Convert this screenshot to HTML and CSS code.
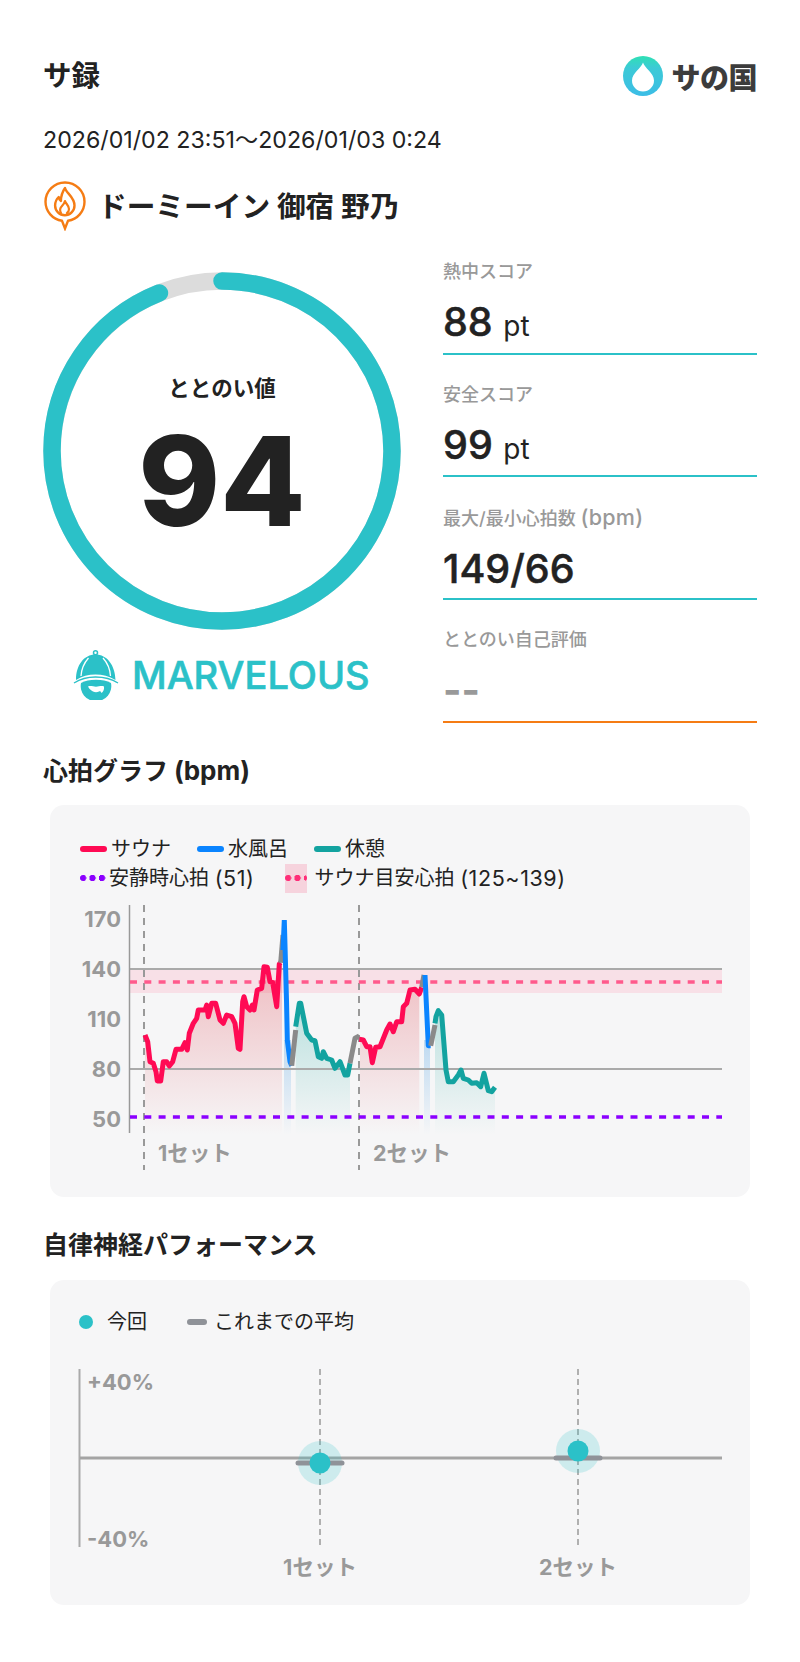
FILE: index.html
```html
<!DOCTYPE html>
<html lang="ja">
<head>
<meta charset="utf-8">
<title>サ録</title>
<link rel="stylesheet" href="styles.css">
</head>
<body>
<main class="page">
  <header class="top">
    <h1 class="title">サ録</h1>
    <div class="logo">
      <svg class="logo-mark" viewBox="0 0 40 40" aria-hidden="true">
        <defs><linearGradient id="lg" x1="0" y1="0" x2="0" y2="1"><stop offset="0" stop-color="#2fe0b4"/><stop offset=".3" stop-color="#3ccad6"/><stop offset="1" stop-color="#3cbde6"/></linearGradient></defs>
        <circle cx="20" cy="20" r="20" fill="url(#lg)"/>
        <path d="M20 6.500C21.500 12 31 17 31 24.500A11 11 0 0 1 9 24.500C9 17 18.500 12 20 6.500Z" fill="#fff"/>
      </svg>
      <span class="logo-text">サの国</span>
    </div>
  </header>
  <p class="date">2026/01/02 23:51～2026/01/03 0:24</p>
  <div class="venue">
    <svg class="pin" viewBox="0 0 42 50" aria-hidden="true">
      <path d="M21 1.500C10.200 1.500 1.500 10.200 1.500 20.800c0 9.600 7.100 17.600 16.500 19L21 47.500l3-7.700c9.400-1.400 16.500-9.400 16.500-19C40.500 10.200 31.800 1.500 21 1.500Z" fill="none" stroke="#f57c14" stroke-width="2.400"/>
      <path d="M21 7c1 5 9.500 9 9.500 17.500a9.700 9.700 0 0 1-19.400 0c0-4 1.800-6.800 3.600-8.500.3 2 1 3.300 2.200 4C17 15.500 18.500 10.500 21 7Z" fill="none" stroke="#f57c14" stroke-width="2.400" stroke-linejoin="round"/>
      <path d="M17 32c-1.500-2.500-1-5 1-7 1.500-1.500 2.500-3 3-5 .5 2.500 4 4.500 4 8 0 1.800-1 3.300-2 4" fill="none" stroke="#f57c14" stroke-width="2.200" stroke-linejoin="round" stroke-linecap="round"/>
    </svg>
    <span class="venue-name">ドーミーイン 御宿 野乃</span>
  </div>

  <section class="summary">
    <div class="score">
      <div class="ring">
        <svg class="ring-svg" viewBox="0 0 358 358" aria-hidden="true">
          <circle cx="179" cy="179" r="170" fill="none" stroke="#dcdcdc" stroke-width="17.500"/>
          <circle cx="179" cy="179" r="170" fill="none" stroke="#2bc1c8" stroke-width="17.500" stroke-linecap="round" pathLength="100" stroke-dasharray="94 6" transform="rotate(-90 179 179)"/>
        </svg>
        <div class="ring-inner">
          <span class="ring-label">ととのい値</span>
          <span class="ring-value">94</span>
        </div>
      </div>
      <div class="rank">
        <svg class="rank-icon" viewBox="0 0 46 50" aria-hidden="true">
          <circle cx="22.500" cy="2.800" r="2" fill="none" stroke="#2bc1c8" stroke-width="1.500"/>
          <path d="M3 30C3 15 11 4.500 22.500 4.500S42 15 42.500 30C36 26 29.500 24.500 22.500 24.500S9 26 3 30Z" fill="#2bc1c8"/>
          <path d="M15.500 8C11 13 8.500 19 8 26M30 8c4.500 5 7 11 7.500 18" fill="none" stroke="#fff" stroke-width="1.300"/>
          <path d="M1 33c7-4.500 14-6 21.500-6S38 28.500 45 33" fill="none" stroke="#2bc1c8" stroke-width="1.400"/>
          <path d="M8 33c4-2 9-3.200 15-3.200s11 1.200 15 3.200a15.300 15.300 0 1 1-30 0Z" fill="#2bc1c8"/>
          <path d="M15 36.500c3-1 5 .3 8 .3s5-1.300 8-.3c.5 3-1 5.500-2.500 6.500-.5-1.500-1.500-2-2.500-1.500-2 1-4 1-6 0-1.500-.7-3.500-2-5-5Z" fill="#fff"/>
        </svg>
        <span class="rank-text">MARVELOUS</span>
      </div>
    </div>
    <dl class="stats">
      <div class="stat"><dt class="stat-label">熱中スコア</dt><dd class="stat-value">88 <span class="unit">pt</span></dd></div>
      <div class="stat"><dt class="stat-label">安全スコア</dt><dd class="stat-value">99 <span class="unit">pt</span></dd></div>
      <div class="stat"><dt class="stat-label">最大/最小心拍数 <span class="label-lat">(bpm)</span></dt><dd class="stat-value">149/66</dd></div>
      <div class="stat stat-self"><dt class="stat-label">ととのい自己評価</dt><dd class="stat-value stat-empty">--</dd></div>
    </dl>
  </section>

  <h2 class="heading hr">心拍グラフ <span class="head-lat">(bpm)</span></h2>
  <section class="card card-hr">
    <div class="legend">
      <span class="lg"><i class="sw sw-red"></i>サウナ</span>
      <span class="lg"><i class="sw sw-blue"></i>水風呂</span>
      <span class="lg"><i class="sw sw-teal"></i>休憩</span>
    </div>
    <div class="legend">
      <span class="lg lg-rest"><i class="dots dots-purple"></i>安静時心拍&nbsp;<span class="lat">(51)</span></span>
      <span class="lg"><i class="band"><i class="dots dots-pink"></i></i>サウナ目安心拍&nbsp;<span class="lat">(125~139)</span></span>
    </div>
    <svg class="plot" viewBox="50 895 700 290" aria-label="心拍グラフ">
      <defs>
        <linearGradient id="gr" gradientUnits="userSpaceOnUse" x1="0" y1="960" x2="0" y2="1135"><stop offset="0" stop-color="#e04a55" stop-opacity=".34"/><stop offset="1" stop-color="#e04a55" stop-opacity="0"/></linearGradient>
        <linearGradient id="gt" gradientUnits="userSpaceOnUse" x1="0" y1="1000" x2="0" y2="1135"><stop offset="0" stop-color="#1aa89e" stop-opacity=".28"/><stop offset="1" stop-color="#1aa89e" stop-opacity="0"/></linearGradient>
        <linearGradient id="gb" gradientUnits="userSpaceOnUse" x1="0" y1="1040" x2="0" y2="1135"><stop offset="0" stop-color="#2c90e0" stop-opacity=".28"/><stop offset="1" stop-color="#2c90e0" stop-opacity="0"/></linearGradient>
      </defs>
      <rect x="130" y="969" width="592" height="24" fill="#f8e0e7"/>
      <path class="a" fill="url(#gr)" d="M145 1135V1035L147.700 1041.700 150 1061.700 153.300 1063.300 156 1071.700 157.300 1081 160.700 1081 163.300 1061.700 166.700 1061.700 169.300 1066 172.700 1061.700 176 1049.300 181.700 1049.300 185 1042.700 187.300 1050 189.300 1033.300 193.300 1023.300 196.700 1018.300 198.300 1010 205 1010 206.700 1005 208.300 1016.700 211.700 1003.300 215.700 1003.300 220 1020 223.300 1023.300 226.700 1015 231.700 1016.700 235 1023.300 238.300 1048.300 240 1049.300 242.700 1001.700 244 996.700 246.700 1006.700 250 1010 252.300 1005 254 1010 257.300 990 261.700 988.300 264 966.700 267.300 967.300 270 981.700 272.700 982.700 276.700 1006.700 279.300 964 282 963V1135Z"/>
      <path class="a" fill="url(#gb)" d="M284 1040H291V1135H284Z"/>
      <path class="a" fill="url(#gt)" d="M295.700 1135V1026.700L299.300 1003.300 300.700 1003.300 306.700 1033.300 311.700 1040 315 1040.700 318.300 1056.700 321.700 1058.300 323.300 1051.700 326.700 1058.300 331.700 1060 335 1068.300 340 1061.700 345 1075 347.700 1075 350 1063.300V1135Z"/>
      <path class="a" fill="url(#gr)" d="M360 1135V1038.300L363.300 1040 366.700 1046.700 370 1046.700 372.300 1062.700 375.700 1047.300 380 1046.700 386.700 1030 390 1024 393.300 1031.700 396.700 1021.700 401.700 1021.700 403.300 1006.700 406.700 1003.300 410 990 415 989.300 419.300 994V1135Z"/>
      <path class="a" fill="url(#gb)" d="M424 1040H430V1135H424Z"/>
      <path class="a" fill="url(#gt)" d="M435 1135V1023.300L436 1016.700 438.300 1010.700 441.700 1015 446 1070 448.300 1081.700 453.300 1081.700 458.300 1075 461 1070 463.300 1078.300 468.300 1080 471.700 1083.300 476.700 1082.700 480.700 1086.700 484 1073.300 488.300 1090.700 491.700 1091.700 495 1087.300V1135Z"/>

      <path class="grid" d="M130 969H722M130 1069H722"/>
      <path class="axis" d="M129.500 905V1133"/>
      <path class="setline" d="M144 905V1170M359 905V1170"/>
      <path class="target" d="M130 982H722"/>
      <path class="rest" d="M130 1117H722"/>

      <path class="s s-red" d="M145 1035L147.700 1041.700 150 1061.700 153.300 1063.300 156 1071.700 157.300 1081 160.700 1081 163.300 1061.700 166.700 1061.700 169.300 1066 172.700 1061.700 176 1049.300 181.700 1049.300 185 1042.700 187.300 1050 189.300 1033.300 193.300 1023.300 196.700 1018.300 198.300 1010 205 1010 206.700 1005 208.300 1016.700 211.700 1003.300 215.700 1003.300 220 1020 223.300 1023.300 226.700 1015 231.700 1016.700 235 1023.300 238.300 1048.300 240 1049.300 242.700 1001.700 244 996.700 246.700 1006.700 250 1010 252.300 1005 254 1010 257.300 990 261.700 988.300 264 966.700 267.300 967.300 270 981.700 272.700 982.700 276.700 1006.700 279.300 964 280.700 962.700"/>
      <path class="s s-grey" d="M280.700 962.700L283 935"/>
      <path class="s s-blue s-peak" d="M283 950L284.300 920 286.500 1000 287.300 1040 290 1061.700 291.700 1065.700"/>
      <path class="s s-grey" d="M291.700 1065.700L295.700 1030"/>
      <path class="s s-teal" d="M295.700 1026.700L299.300 1003.300 300.700 1003.300 306.700 1033.300 311.700 1040 315 1040.700 318.300 1056.700 321.700 1058.300 323.300 1051.700 326.700 1058.300 331.700 1060 335 1068.300 340 1061.700 345 1075 347.700 1075 350 1063.300"/>
      <path class="s s-grey" d="M350 1063.300L355 1038.300 359.300 1036"/>
      <path class="s s-red" d="M359.300 1039.300L363.300 1040 366.700 1046.700 370 1046.700 372.300 1062.700 375.700 1047.300 380 1046.700 386.700 1030 390 1024 393.300 1031.700 396.700 1021.700 401.700 1021.700 403.300 1006.700 406.700 1003.300 410 990 415 989.300 419.300 994 421.700 987.300"/>
      <path class="s s-grey" d="M421.700 987.300L424 975"/>
      <path class="s s-blue" d="M425 975L428.300 1045.700 430.700 1045.700"/>
      <path class="s s-grey" d="M430.700 1045.700L435 1025"/>
      <path class="s s-teal" d="M435 1023.300L436 1016.700 438.300 1010.700 441.700 1015 446 1070 448.300 1081.700 453.300 1081.700 458.300 1075 461 1070 463.300 1078.300 468.300 1080 471.700 1083.300 476.700 1082.700 480.700 1086.700 484 1073.300 488.300 1090.700 491.700 1091.700 495 1087.300"/>

      <text class="ylab" x="121" y="926.500">170</text>
      <text class="ylab" x="121" y="977">140</text>
      <text class="ylab" x="121" y="1027">110</text>
      <text class="ylab" x="121" y="1077">80</text>
      <text class="ylab" x="121" y="1127">50</text>
      <text class="xlab" x="158" y="1161">1セット</text>
      <text class="xlab" x="373" y="1161">2セット</text>
    </svg>
  </section>

  <h2 class="heading ans">自律神経パフォーマンス</h2>
  <section class="card card-ans">
    <div class="legend legend-ans">
      <span class="lg lg-now"><i class="dot"></i>今回</span>
      <span class="lg lg-avg"><i class="dash"></i>これまでの平均</span>
    </div>
    <svg class="plot2" viewBox="50 1350 700 240" aria-label="自律神経パフォーマンス">
      <path class="axis2" d="M79.500 1369V1547"/>
      <path class="setline2" d="M320 1369V1547M578 1369V1547"/>
      <path class="h" d="M80 1458H722"/>
      <circle cx="320" cy="1463" r="22" fill="#2bc1c8" opacity=".2"/>
      <path class="mean" d="M298 1463H342"/>
      <circle cx="320" cy="1463" r="10.500" fill="#2bc1c8"/>
      <circle cx="578" cy="1451" r="22" fill="#2bc1c8" opacity=".2"/>
      <path class="mean" d="M556 1458H600"/>
      <circle cx="578" cy="1451" r="10.500" fill="#2bc1c8"/>
      <text class="plab" x="87" y="1390">+40%</text>
      <text class="plab" x="87" y="1547">-40%</text>
      <text class="xlab mid" x="320" y="1575">1セット</text>
      <text class="xlab mid" x="578" y="1575">2セット</text>
    </svg>
  </section>
</main>
</body>
</html>
```
FILE: styles.css
```css
* { box-sizing: border-box; }
html, body { margin: 0; padding: 0; background: #fff; }
body {
  font-family: Inter, "Noto Sans CJK JP", sans-serif;
  color: #222;
}
.page { width: 800px; height: 1662px; padding: 50px 43px 0 43px; overflow: hidden; }
.top { display: flex; justify-content: space-between; align-items: center; height: 52px; }
.title { margin: 0; font-size: 28.500px; font-weight: 700; line-height: 52px; }
.logo { display: flex; align-items: center; gap: 8px; }
.logo-mark { width: 40px; height: 40px; }
.logo-text { font-size: 29px; font-weight: 900; color: #3c3c3c; letter-spacing: -.5px; font-family: "Noto Sans CJK JP", sans-serif; }
.date { margin: 24px 0 0; font-size: 23.200px; line-height: 28px; font-weight: 400; color: #222; }
.venue { display: flex; align-items: center; gap: 12px; margin: 27px 0 0 1px; height: 50px; }
.pin { width: 42px; height: 50px; }
.venue-name { font-size: 28.700px; font-weight: 700; padding-bottom: 4px; }
.summary { display: flex; justify-content: space-between; }
.score { width: 358px; }
.ring { position: relative; width: 358px; height: 358px; margin-top: 41px; }
.ring-svg { display: block; width: 358px; height: 358px; }
.ring-inner { position: absolute; inset: 0; display: flex; flex-direction: column; align-items: center; }
.ring-label { margin-top: 101px; font-size: 21.500px; font-weight: 700; line-height: 30px; }
.ring-value { margin-top: 13px; font-size: 124px; font-weight: 800; line-height: 130px; color: #222; }
.rank { display: flex; align-items: center; gap: 13px; margin: 20px 0 0 30px; }
.rank-icon { width: 46px; height: 50px; }
.rank-text { font-size: 38px; font-weight: 500; color: #2bc1c8; -webkit-text-stroke: .6px #2bc1c8; }
.stats { margin: 1px 0 0; width: 314px; }
.stat { height: 122.670px; border-bottom: 2px solid #2bc1c8; padding-top: 27px; }
.stat-self { border-bottom-color: #f57c14; }
.stat-label { font-size: 18px; line-height: 26px; font-weight: 500; color: #999; }
.label-lat { font-size: 21.500px; letter-spacing: .3px; }
.stat-value { margin: 14px 0 0; font-size: 39.500px; line-height: 46px; font-weight: 500; color: #222; -webkit-text-stroke: .5px #222; }
.unit { font-size: 28px; font-weight: 400; -webkit-text-stroke: 0; }
.stat-empty { color: #999; font-weight: 700; -webkit-text-stroke: 0; }
.heading { margin: 0; font-size: 25px; line-height: 32px; font-weight: 700; }
.head-lat { font-size: 26px; }
.heading.hr { margin-top: 32px; }
.heading.ans { margin-top: 32px; }
.card { width: 700px; margin-left: 7px; background: #f6f6f7; border-radius: 14px; }
.card-hr { height: 392px; margin-top: 18px; padding-top: 30px; }
.card-ans { height: 325px; margin-top: 19px; padding-top: 28px; }
.legend { display: flex; padding-left: 30px; font-size: 20px; line-height: 29px; height: 29px; color: #222; }
.lg { display: flex; align-items: center; margin-right: 26px; white-space: nowrap; }
.lg-rest { margin-right: 30px; }
.lat { font-size: 21.500px; letter-spacing: .6px; }
.sw { width: 27px; height: 6px; border-radius: 3px; margin-right: 4px; }
.sw-red { background: #ff0a54; }
.sw-blue { background: #0a84ff; }
.sw-teal { background: #13a3a0; }
.dots { width: 26px; height: 6px; margin-right: 3px; border-radius: 3px; }
.dots-purple { background: radial-gradient(circle at 3px 3px, #8b00ff 3px, transparent 3.5px) 0 0 / 9.500px 6px repeat-x; }
.dots-pink { background: radial-gradient(circle at 3px 3px, #ff2d78 3px, transparent 3.5px) 0 0 / 9.500px 6px repeat-x; margin: 0; }
.band { display: flex; align-items: center; justify-content: center; width: 22px; height: 29px; margin-right: 8px; background: #f6d3dd; }
.plot { display: block; width: 700px; height: 290px; margin-top: 2px; }
.plot2 { display: block; width: 700px; height: 240px; margin-top: 13px; }
.a { stroke: none; }
.grid { fill: none; stroke: #aaa; stroke-width: 2; }
.axis { fill: none; stroke: #999; stroke-width: 1.500; }
.setline { fill: none; stroke: #999; stroke-width: 2; stroke-dasharray: 7 6; }
.target { fill: none; stroke: #ff5a8c; stroke-width: 3.500; stroke-dasharray: 7 7.300; }
.rest { fill: none; stroke: #8b00ff; stroke-width: 3.500; stroke-dasharray: 7 7.300; }
.s { fill: none; stroke-width: 5; stroke-linejoin: round; stroke-linecap: butt; }
.s-red { stroke: #ff0a54; }
.s-blue { stroke: #0a84ff; }
.s-peak { stroke-linejoin: miter; stroke-miterlimit: 20; }
.s-teal { stroke: #13a3a0; }
.s-grey { stroke: #8a8a8a; }
.ylab { font-size: 22px; font-weight: 700; fill: #999; text-anchor: end; }
.xlab { font-size: 21.500px; font-weight: 700; fill: #999; }
.xlab.mid { text-anchor: middle; }
.plab { font-size: 22px; font-weight: 700; fill: #999; }
.axis2 { fill: none; stroke: #aaa; stroke-width: 2; }
.setline2 { fill: none; stroke: #999; stroke-width: 1.500; stroke-dasharray: 6 4; }
.h { fill: none; stroke: #a4a4a4; stroke-width: 3; }
.mean { fill: none; stroke: #8f9298; stroke-width: 5; stroke-linecap: round; }
.legend-ans { padding-left: 29px; }
.lg-now { margin-right: 40px; }
.lg-avg { margin-right: 0; }
.dot { width: 14px; height: 14px; border-radius: 50%; background: #2bc1c8; margin-right: 14px; }
.dash { width: 20px; height: 6px; border-radius: 3px; background: #8f9298; margin-right: 7px; }
```
